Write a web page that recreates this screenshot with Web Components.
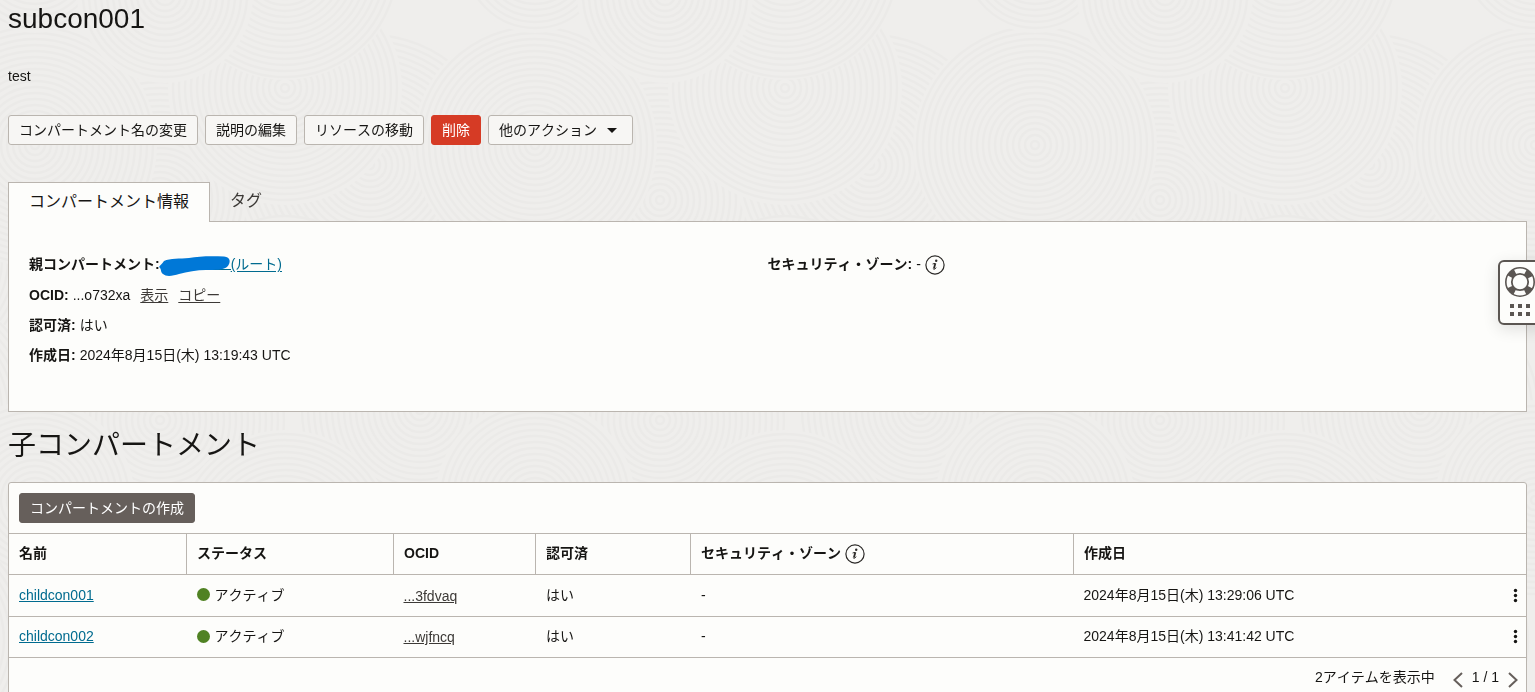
<!DOCTYPE html>
<html lang="ja">
<head>
<meta charset="utf-8">
<title>subcon001</title>
<style>
    body {
        margin: 0;
        height: 692px;
        overflow: hidden;
        background: #efeeec;
        color: #161513;
        font: 14px/20px "Liberation Sans", "Noto Sans CJK JP", sans-serif;
        font-kerning: none;
        --line: #bab5af;
        --panel: #fdfdfb;
        --link: #006b8f;
    }
</style>
</head>
<body>
<compartment-page></compartment-page>

<script>
class SwirlBackdrop extends HTMLElement {
    constructor() {
        super();
        this.attachShadow({mode: 'open'});
    }

    connectedCallback() {
        // x, y, radius inside one 500px tile; later swirls cover the earlier ones
        const swirls = [
            [160, 200, 130], [420, 260, 110], [370, 165, 135], [285, 88, 117], [35, 145, 122],
            [35, -42, 75], [285, -35, 115], [165, -5, 88], [285, 310, 95],
            [160, 420, 130], [420, 410, 120], [35, 500, 100], [285, 540, 110], [160, 620, 110], [410, 640, 120]
        ];
        const rings = swirls.map(([x, y, r]) => {
            let out = `<circle cx="${x}" cy="${y}" r="${r}" fill="#efeeec" stroke="none"/>`;
            for (let i = 4; i < r; i += 6) {
                out += `<circle cx="${x}" cy="${y}" r="${i}"/>`;
            }
            return out;
        });
        // one swirl at a time over all tiles, so that the tiles overlap evenly
        const tiles = rings.map(ring => [-500, 0, 500, 1000, 1500].map(x => `<g transform="translate(${x})">${ring}</g>`).join('')).join('');
        this.shadowRoot.innerHTML = `<style>
            :host { position: fixed; inset: 0; z-index: -1; }
            svg { display: block; }
        </style>
        <svg width="1535" height="692" fill="none" stroke="#ebeae8" stroke-width="2.4">${tiles}</svg>`;
    }
}
customElements.define('swirl-backdrop', SwirlBackdrop);

class ActionButton extends HTMLElement {
    constructor() {
        super();
        this.attachShadow({mode: 'open'});
        this.shadowRoot.innerHTML = `<style>
            :host { display: inline-flex; }
            button {
                display: flex;
                align-items: center;
                height: 30px;
                padding: 0 10px 1px;
                border: 1px solid var(--line);
                border-radius: 3px;
                background: #f7f6f4;
                color: inherit;
                font: inherit;
                font-kerning: none;
                white-space: nowrap;
            }
            :host([kind="danger"]) button { background: #d63b25; border-color: #d63b25; color: #fff; }
            :host([kind="primary"]) button { background: #665f5b; border-color: #665f5b; color: #fff; }
            svg { display: none; margin: 2px 5px 0 10px; }
            :host([menu]) svg { display: block; }
        </style>
        <button><slot></slot><svg width="10" height="5"><path d="M0 0h10L5 5z" fill="#161513"/></svg></button>`;
    }
}
customElements.define('action-button', ActionButton);

class InfoIcon extends HTMLElement {
    constructor() {
        super();
        this.attachShadow({mode: 'open'});
        this.shadowRoot.innerHTML = `<style>
            :host { display: inline-flex; }
        </style>
        <svg width="20" height="20" fill="none" stroke="#2b2927">
            <circle cx="10" cy="10" r="9.1" stroke-width="1.2"/>
            <circle cx="11.2" cy="5.7" r="1.2" fill="#2b2927" stroke="none"/>
            <path d="M7.6 9l2.4-.6" stroke-width="1"/>
            <path d="M10.4 8.2L8.900 13.500" stroke-width="1.8"/>
            <path d="M8.300 13.600q.2 1.200 1.300.5l1.700-1.400" stroke-width="1"/>
        </svg>`;
    }
}
customElements.define('info-icon', InfoIcon);

class InfoRow extends HTMLElement {
    constructor() {
        super();
        this.attachShadow({mode: 'open'});
    }

    connectedCallback() {
        this.shadowRoot.innerHTML = `<style>
            :host { display: flex; align-items: center; height: 30px; white-space: pre; }
            b { margin-right: 4px; }
        </style>
        <b>${this.getAttribute('label')}:</b><slot></slot>`;
    }
}
customElements.define('info-row', InfoRow);

class TabPanel extends HTMLElement {
    constructor() {
        super();
        this.attachShadow({mode: 'open'});
        this.shadowRoot.innerHTML = `<style>
            :host { display: block; }
            nav { display: flex; height: 39px; font-size: 16px; }
            span { padding: 9px 20px 0; color: #3d3a37; }
            .active {
                box-sizing: border-box;
                height: 40px;
                width: 202px;
                padding: 9px 19px 0 20px;
                border: 1px solid var(--line);
                border-bottom: 0;
                background: var(--panel);
                color: #161513;
                z-index: 1;
                white-space: nowrap;
            }
            section {
                box-sizing: border-box;
                height: 191px;
                padding: 27px 20px 0;
                border: 1px solid var(--line);
                background: var(--panel);
                display: grid;
                grid-template-columns: 1fr 1fr;
            }
        </style>
        <nav><span class="active">コンパートメント情報</span><span>タグ</span></nav>
        <section>
            <div><slot></slot></div>
            <div><slot name="side"></slot></div>
        </section>`;
    }
}
customElements.define('tab-panel', TabPanel);

class CompartmentRow extends HTMLElement {
    constructor() {
        super();
        this.attachShadow({mode: 'open'});
    }

    connectedCallback() {
        const get = name => this.getAttribute(name);
        this.shadowRoot.innerHTML = `<style>
            :host {
                display: grid;
                grid-template-columns: 178px 207px 142px 155px 383px 1fr auto;
                align-items: center;
                height: 40px;
                border-bottom: 1px solid var(--line);
            }
            span { padding: 0 0 2px 10px; }
            u { color: #3d3a37; text-underline-offset: 1px; }
            u.name { color: var(--link); }
            .status { display: flex; align-items: center; gap: 5px; padding-left: 9.5px; }
            .ocid { padding: 0 0 0 9.5px; }
            .dash { padding-left: 10px; }
            .date { padding-left: 9.5px; }
            svg { display: block; }
            .more { margin: 0 8px 1px 0; }
        </style>
        <span><u class="name">${get('name')}</u></span>
        <span class="status"><svg width="13" height="13"><circle cx="6.5" cy="6.5" r="6.5" fill="#508223"/></svg>アクティブ</span>
        <span class="ocid"><u>...${get('ocid')}</u></span>
        <span>はい</span>
        <span class="dash">-</span>
        <span class="date">${get('created')}</span>
        <svg class="more" width="5" height="15" fill="#161513"><circle cx="2.5" cy="2.5" r="1.7"/><circle cx="2.5" cy="7.5" r="1.7"/><circle cx="2.5" cy="12.5" r="1.7"/></svg>`;
    }
}
customElements.define('compartment-row', CompartmentRow);

class CompartmentTable extends HTMLElement {
    constructor() {
        super();
        this.attachShadow({mode: 'open'});
        this.shadowRoot.innerHTML = `<style>
            :host {
                display: block;
                height: 240px;
                border: 1px solid var(--line);
                border-radius: 3px;
                background: var(--panel);
            }
            .toolbar { height: 50px; display: flex; align-items: center; padding-left: 10px; border-bottom: 1px solid var(--line); }
            .head {
                display: grid;
                grid-template-columns: 178px 207px 142px 155px 383px 1fr;
                height: 40px;
                border-bottom: 1px solid var(--line);
                font-weight: bold;
            }
            .head span { display: flex; align-items: center; gap: 4px; padding: 0 0 2px 10px; border-right: 1px solid var(--line); }
            .head span:last-child { border: 0; }
            info-icon { margin-top: 2px; }
            footer { display: flex; justify-content: flex-end; align-items: center; height: 40px; padding-right: 8px; }
            footer svg { margin-top: 4px; }
            footer span { padding-bottom: 2px; }
            .prev { margin-left: 18px; }
            .page { margin: 0 9px; }
        </style>
        <div class="toolbar"><action-button kind="primary">コンパートメントの作成</action-button></div>
        <div class="head">
            <span>名前</span><span>ステータス</span><span>OCID</span><span>認可済</span><span>セキュリティ・ゾーン<info-icon></info-icon></span><span>作成日</span>
        </div>
        <slot></slot>
        <footer>
            <span>2アイテムを表示中</span>
            <svg class="prev" width="10" height="16" fill="none" stroke="#665f5b" stroke-width="2"><path d="M9 1L1.5 8L9 15"/></svg>
            <span class="page">1 / 1</span>
            <svg width="10" height="16" fill="none" stroke="#665f5b" stroke-width="2"><path d="M1 1l7.5 7L1 15"/></svg>
        </footer>`;
    }
}
customElements.define('compartment-table', CompartmentTable);

class HelpWidget extends HTMLElement {
    constructor() {
        super();
        this.attachShadow({mode: 'open'});
        this.shadowRoot.innerHTML = `<style>
            :host {
                position: fixed;
                box-sizing: border-box;
                left: 1498px;
                top: 260px;
                width: 50px;
                height: 65px;
                border: 2px solid #5b5652;
                border-radius: 6px;
                background: var(--panel);
                box-shadow: 0 4px 16px rgba(0, 0, 0, .12);
            }
            svg { display: block; }
        </style>
        <svg width="40" height="61" fill="none" stroke="#5b5652">
            <circle cx="20" cy="20" r="14.2" stroke-width="1.6"/>
            <circle cx="20" cy="20" r="8.2" stroke-width="1.8"/>
            <circle cx="20" cy="20" r="11.2" stroke-width="6" stroke-dasharray="7 10.593" transform="rotate(27.1 20 20)"/>
            <path d="M10 44h4m4 0h4m4 0h4M10 52h4m4 0h4m4 0h4" stroke-width="4"/>
        </svg>`;
    }
}
customElements.define('help-widget', HelpWidget);

class CompartmentPage extends HTMLElement {
    constructor() {
        super();
        this.attachShadow({mode: 'open'});
    }

    connectedCallback() {
        this.render();
    }

    get style_() {
        return `<style>
            :host { display: block; padding: 0 8px; }
            h1, h2 { margin: 0; font-size: 28px; font-weight: normal; }
            h1 { height: 66px; line-height: 37px; }
            p { margin: 0; height: 49px; }
            .actions { display: flex; gap: 7px; height: 67px; }
            h2 { height: 70px; line-height: 68px; }
            u { color: #3d3a37; margin-left: 10px; text-underline-offset: 2px; }
            u.root { color: var(--link); margin-left: 0; }
            .mask { margin: 4px 0 0 -5px; }
            .first { margin-bottom: 1px; }
            info-icon { margin: 2px 0 0 4px; }
        </style>`;
    }

    get template() {
        return `<swirl-backdrop></swirl-backdrop>
        <h1>subcon001</h1>
        <p>test</p>
        <div class="actions">
            <action-button>コンパートメント名の変更</action-button>
            <action-button>説明の編集</action-button>
            <action-button>リソースの移動</action-button>
            <action-button kind="danger">削除</action-button>
            <action-button menu>他のアクション</action-button>
        </div>
        <tab-panel>
            <info-row class="first" label="親コンパートメント"><svg class="mask" width="72" height="22"><path d="M34 14.500h38" stroke="#006b8f"/><path d="M5 6C11 3 21 4 30 3C40 1 53 1 65 1.500C72 2 72 8 68 12C64 15 56 15 47 15C38 15 28 17 20 19C14 21 7 22 4 19C1 17 3 14 0 12C1 10 3 9 5 6z" fill="#0078d7"/></svg><u class="root">(ルート)</u></info-row>
            <info-row label="OCID">...o732xa<u>表示</u><u>コピー</u></info-row>
            <info-row label="認可済">はい</info-row>
            <info-row label="作成日">2024年8月15日(木) 13:19:43 UTC</info-row>
            <info-row slot="side" label="セキュリティ・ゾーン">-<info-icon></info-icon></info-row>
        </tab-panel>
        <h2>子コンパートメント</h2>
        <compartment-table>
            <compartment-row name="childcon001" ocid="3fdvaq" created="2024年8月15日(木) 13:29:06 UTC" style="height: 41px"></compartment-row>
            <compartment-row name="childcon002" ocid="wjfncq" created="2024年8月15日(木) 13:41:42 UTC"></compartment-row>
        </compartment-table>
        <help-widget></help-widget>`;
    }

    render() {
        this.shadowRoot.innerHTML = `${this.style_}${this.template}`;
    }
}
customElements.define('compartment-page', CompartmentPage);
</script>
</body>
</html>
